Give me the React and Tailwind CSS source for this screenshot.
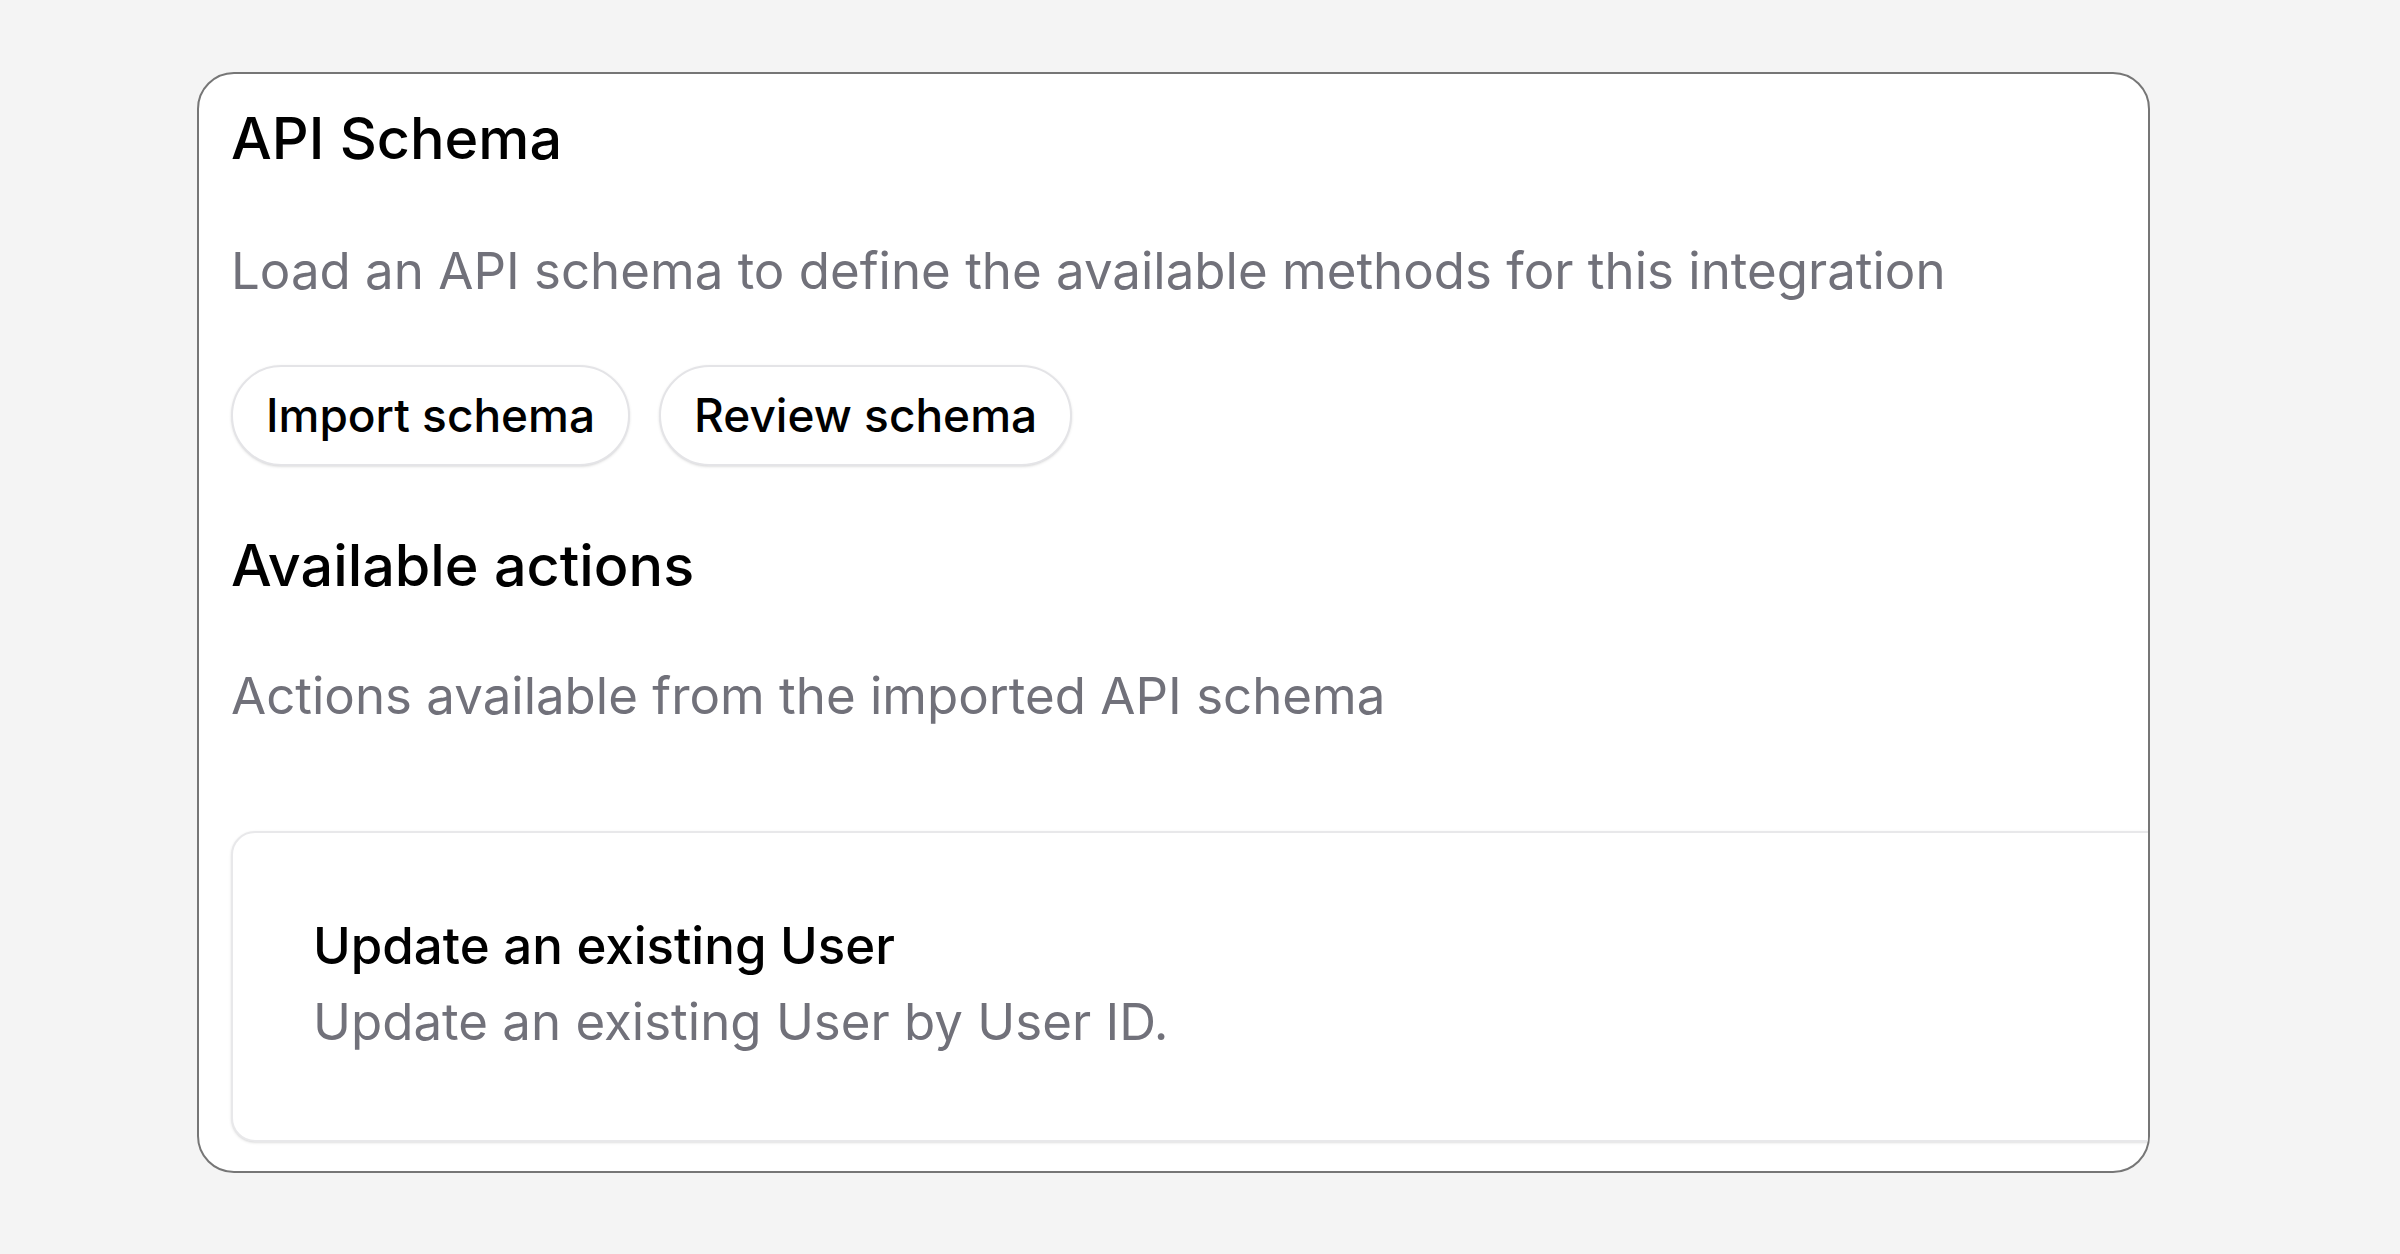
import React from "react";

export default function App() {
  return (
    <div className="min-h-screen w-full bg-[#f4f4f4] pt-[72px] pl-[197px]" style={{ fontFamily: "Inter, 'Noto Sans', sans-serif" }}>
      <div className="w-[1953px] rounded-[37px] border-2 border-[#767676] bg-white overflow-hidden pl-[32px] pt-[28px] pb-[28.5px] flex flex-col items-start">
        <h2 className="text-[57.5px] leading-[72px] font-medium text-black">API Schema</h2>
        <p className="mt-[61px] text-[51px] leading-[72px] text-[#71717a]">
          Load an API schema to define the available methods for this integration
        </p>
        <div className="mt-[58px] flex gap-[29px]">
          <button className="h-[101px] px-[33px] rounded-full border-2 border-[#e4e4e7] bg-white shadow-sm text-[46px] font-medium text-black">
            Import schema
          </button>
          <button className="h-[101px] px-[33px] rounded-full border-2 border-[#e4e4e7] bg-white shadow-sm text-[46px] font-medium text-black">
            Review schema
          </button>
        </div>
        <h2 className="mt-[63px] text-[57.5px] leading-[72px] font-medium text-black">Available actions</h2>
        <p className="mt-[59px] text-[51px] leading-[72px] text-[#71717a]">
          Actions available from the imported API schema
        </p>
        <div className="mt-[98.5px] w-[2000px] shrink-0 rounded-[24px] border-2 border-[#e8e8ea] bg-white shadow-sm pl-[80px] pt-[75px] pb-[82.5px] flex flex-col">
          <div className="text-[51px] leading-[75px] font-medium text-black">Update an existing User</div>
          <div className="mt-[3px] text-[51px] leading-[72px] text-[#71717a]">Update an existing User by User ID.</div>
        </div>
      </div>
    </div>
  );
}
